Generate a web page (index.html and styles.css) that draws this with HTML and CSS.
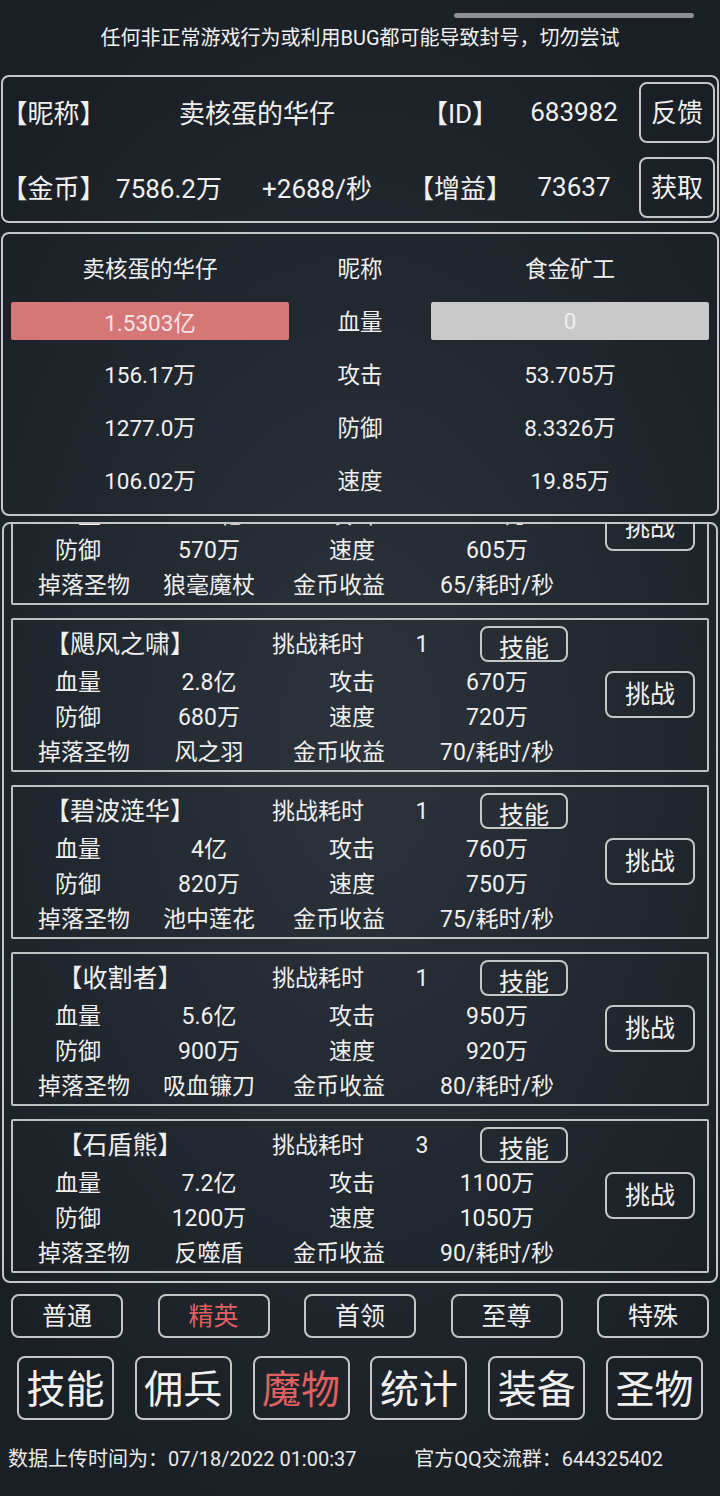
FILE: index.html
```html
<!DOCTYPE html>
<html lang="zh">
<head>
<meta charset="utf-8">
<title>魔物</title>
<link rel="stylesheet" href="styles.css">
</head>
<body>
<div class="page">
  <div class="statusbar"><div class="pill"></div></div>
  <div class="warning">任何非正常游戏行为或利用BUG都可能导致封号，切勿尝试</div>

  <section class="box header">
    <div class="hc c1">【昵称】</div>
    <div class="hc name">卖核蛋的华仔</div>
    <div class="hc c4">【ID】</div>
    <div class="hc c5">683982</div>
    <div class="hc c6"><button class="btn hbtn">反馈</button></div>

    <div class="hc c1">【金币】</div>
    <div class="hc c2">7586.2万</div>
    <div class="hc c3">+2688/秒</div>
    <div class="hc c4">【增益】</div>
    <div class="hc c5">73637</div>
    <div class="hc c6"><button class="btn hbtn">获取</button></div>
  </section>

  <section class="box battle">
    <div class="bc">卖核蛋的华仔</div><div class="bc">昵称</div><div class="bc">食金矿工</div>
    <div class="bc bar red">1.5303亿</div><div class="bc">血量</div><div class="bc bar gray">0</div>
    <div class="bc">156.17万</div><div class="bc">攻击</div><div class="bc">53.705万</div>
    <div class="bc">1277.0万</div><div class="bc">防御</div><div class="bc">8.3326万</div>
    <div class="bc">106.02万</div><div class="bc">速度</div><div class="bc">19.85万</div>
  </section>

  <section class="box list">
    <div class="track">
      <div class="card">
        <div class="trow"></div>
        <span class="cell">血量</span><span class="cell">2.05亿</span><span class="cell">攻击</span><span class="cell">590万</span>
        <button class="btn fight">挑战</button>
        <span class="cell">防御</span><span class="cell">570万</span><span class="cell">速度</span><span class="cell">605万</span>
        <span class="cell long1">掉落圣物</span><span class="cell">狼毫魔杖</span><span class="cell long3">金币收益</span><span class="cell">65/耗时/秒</span>
      </div>
      <div class="card">
        <div class="trow"><span class="title">【飓风之啸】</span><span class="cost">挑战耗时</span><span class="num">1</span><button class="btn skill">技能</button></div>
        <span class="cell">血量</span><span class="cell">2.8亿</span><span class="cell">攻击</span><span class="cell">670万</span>
        <button class="btn fight">挑战</button>
        <span class="cell">防御</span><span class="cell">680万</span><span class="cell">速度</span><span class="cell">720万</span>
        <span class="cell long1">掉落圣物</span><span class="cell">风之羽</span><span class="cell long3">金币收益</span><span class="cell">70/耗时/秒</span>
      </div>
      <div class="card">
        <div class="trow"><span class="title">【碧波涟华】</span><span class="cost">挑战耗时</span><span class="num">1</span><button class="btn skill">技能</button></div>
        <span class="cell">血量</span><span class="cell">4亿</span><span class="cell">攻击</span><span class="cell">760万</span>
        <button class="btn fight">挑战</button>
        <span class="cell">防御</span><span class="cell">820万</span><span class="cell">速度</span><span class="cell">750万</span>
        <span class="cell long1">掉落圣物</span><span class="cell">池中莲花</span><span class="cell long3">金币收益</span><span class="cell">75/耗时/秒</span>
      </div>
      <div class="card">
        <div class="trow"><span class="title">【收割者】</span><span class="cost">挑战耗时</span><span class="num">1</span><button class="btn skill">技能</button></div>
        <span class="cell">血量</span><span class="cell">5.6亿</span><span class="cell">攻击</span><span class="cell">950万</span>
        <button class="btn fight">挑战</button>
        <span class="cell">防御</span><span class="cell">900万</span><span class="cell">速度</span><span class="cell">920万</span>
        <span class="cell long1">掉落圣物</span><span class="cell">吸血镰刀</span><span class="cell long3">金币收益</span><span class="cell">80/耗时/秒</span>
      </div>
      <div class="card">
        <div class="trow"><span class="title">【石盾熊】</span><span class="cost">挑战耗时</span><span class="num">3</span><button class="btn skill">技能</button></div>
        <span class="cell">血量</span><span class="cell">7.2亿</span><span class="cell">攻击</span><span class="cell">1100万</span>
        <button class="btn fight">挑战</button>
        <span class="cell">防御</span><span class="cell">1200万</span><span class="cell">速度</span><span class="cell">1050万</span>
        <span class="cell long1">掉落圣物</span><span class="cell">反噬盾</span><span class="cell long3">金币收益</span><span class="cell">90/耗时/秒</span>
      </div>
    </div>
  </section>

  <nav class="tabs-small">
    <button class="btn tab">普通</button>
    <button class="btn tab active">精英</button>
    <button class="btn tab">首领</button>
    <button class="btn tab">至尊</button>
    <button class="btn tab">特殊</button>
  </nav>

  <nav class="tabs-big">
    <button class="btn big">技能</button>
    <button class="btn big">佣兵</button>
    <button class="btn big active">魔物</button>
    <button class="btn big">统计</button>
    <button class="btn big">装备</button>
    <button class="btn big">圣物</button>
  </nav>

  <footer class="footer">
    <span class="f-left">数据上传时间为：07/18/2022 01:00:37</span>
    <span class="f-right">官方QQ交流群：644325402</span>
  </footer>
</div>
</body>
</html>
```

FILE: styles.css
```css
html, body {
  margin: 0;
  padding: 0;
}
body {
  width: 720px;
  height: 1496px;
  overflow: hidden;
  background: radial-gradient(ellipse 70% 55% at 50% 50%, #2c333b 0%, #222930 50%, #1a1f25 100%);
  color: #f0f0f0;
  font-family: "Roboto", "Noto Sans CJK SC", sans-serif;
}
.page {
  width: 720px;
  height: 1496px;
  display: flex;
  flex-direction: column;
}
.statusbar {
  height: 24px;
  padding-top: 13px;
  box-sizing: border-box;
}
.pill {
  margin-left: 454px;
  width: 240px;
  height: 5px;
  border-radius: 3px;
  background: #8d8f92;
}
.warning {
  height: 28px;
  line-height: 28px;
  font-size: 20px;
  text-align: center;
  color: #f2f2f2;
}
.box {
  border: 2px solid #c4c6c8;
  border-radius: 8px;
  margin: 0 1px;
  box-sizing: border-box;
}
.btn {
  font-family: "Roboto", "Noto Sans CJK SC", sans-serif;
  background: transparent;
  color: #f0f0f0;
  border: 2px solid #c4c6c8;
  border-radius: 8px;
  padding: 0 0 4px 0;
  margin: 0;
}

/* header */
.header {
  margin-top: 23px;
  height: 148px;
  padding: 5px 0 4px 0;
  display: grid;
  grid-template-columns: 101px 130px 166px 120px 108px 89px;
  grid-template-rows: 61px 61px;
  row-gap: 14px;
  font-size: 26px;
}
.hc {
  display: flex;
  align-items: center;
  justify-content: center;
  white-space: nowrap;
  padding-bottom: 2px;
}
.header .name { grid-column: 2 / 4; padding-left: 10px; }
.header .c6 { justify-content: flex-end; padding-right: 2px; padding-bottom: 0; }
.hbtn {
  width: 76px;
  height: 61px;
  font-size: 26px;
}

/* battle */
.battle {
  margin-top: 9px;
  height: 284px;
  padding: 15px 8px;
  display: grid;
  grid-template-columns: 278px 142px 278px;
  grid-auto-rows: 38px;
  row-gap: 15px;
  font-size: 22.5px;
}
.bc {
  display: flex;
  align-items: center;
  justify-content: center;
  white-space: nowrap;
  padding-bottom: 3px;
}
.bar { border-radius: 2px; padding-bottom: 1px; }
.bar.red { background: #d67777; color: #f6e4e4; }
.bar.gray { background: #c9c9c9; color: #eeeeee; }

/* list */
.list {
  margin: 6px 2px 0 2px;
  height: 761px;
  overflow: hidden;
  padding: 0 7px;
}
.track {
  margin-top: -73px;
  display: flex;
  flex-direction: column;
  gap: 13px;
}
.card {
  height: 154px;
  box-sizing: border-box;
  border: 2px solid #bfc1c3;
  border-radius: 2px;
  padding-top: 6px;
  display: grid;
  grid-template-columns: 130px 132px 154px 136px 142px;
  grid-template-rows: 39px 35px 35px 35px;
  font-size: 23px;
}
.trow {
  grid-column: 1 / -1;
  height: 36px;
  display: flex;
  align-items: center;
}
.title { width: 214px; text-align: center; font-size: 25px; padding-bottom: 5px; }
.cost { width: 182px; text-align: center; padding-bottom: 4px; }
.num { width: 26px; text-align: center; padding-bottom: 0; }
.skill {
  margin-left: 45px;
  width: 88px;
  height: 36px;
  font-size: 25px;
  padding-bottom: 8px;
}
.cell {
  display: flex;
  align-items: center;
  justify-content: center;
  white-space: nowrap;
  padding-bottom: 6px;
}
.long1 { padding-left: 12px; }
.long3 { padding-right: 26px; }
.fight {
  grid-column: 5;
  grid-row: 2 / 4;
  align-self: start;
  justify-self: end;
  margin-top: 6px;
  margin-right: 12px;
  width: 90px;
  height: 47px;
  font-size: 25px;
  padding-bottom: 5px;
}

/* tabs */
.tabs-small {
  margin-top: 11px;
  padding: 0 11px;
  display: flex;
  justify-content: space-between;
}
.tab {
  width: 112px;
  height: 44px;
  font-size: 25px;
  padding-bottom: 5px;
}
.tabs-big {
  margin-top: 18px;
  padding: 0 17px;
  display: flex;
  justify-content: space-between;
}
.big {
  width: 97px;
  height: 64px;
  font-size: 39px;
  padding-bottom: 6px;
}
.active { color: #df6060; }

/* footer */
.footer {
  margin-top: 27px;
  height: 24px;
  line-height: 24px;
  font-size: 20px;
  display: flex;
  padding-left: 8px;
  color: #eaeaea;
  white-space: nowrap;
}
.f-right { margin-left: auto; margin-right: 57px; }
```
